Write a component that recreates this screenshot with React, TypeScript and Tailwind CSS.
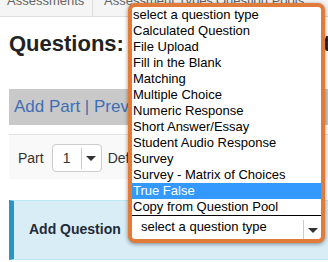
const items = [
  'select a question type',
  'Calculated Question',
  'File Upload',
  'Fill in the Blank',
  'Matching',
  'Multiple Choice',
  'Numeric Response',
  'Short Answer/Essay',
  'Student Audio Response',
  'Survey',
  'Survey - Matrix of Choices',
  'True False',
  'Copy from Question Pool',
];

function Caret() {
  return (
    <svg width="10" height="5" viewBox="0 0 10 5" className="block">
      <path d="M0 0h10L5 5z" fill="#333" />
    </svg>
  );
}

export default function App() {
  return (
    <div className="relative w-[328px] h-[262px] overflow-hidden bg-white font-['Liberation_Sans',Arial,sans-serif]">
      {/* tabs, scrolled off the top */}
      <div className="flex h-[17px] bg-[#f5f5f5] border-b border-[#ddd] text-[13px] leading-[13px] text-[#666] whitespace-nowrap overflow-hidden">
        <div className="w-[93px] shrink-0 pl-[7px] border-r border-[#ddd]"><span className="block -mt-[6px]">Assessments</span></div>
        <div className="w-[117px] shrink-0 pl-[11px] border-r border-[#ddd]"><span className="block -mt-[6px]">Assessment Types</span></div>
        <div className="shrink-0 pl-[6px]"><span className="block -mt-[6px]">Question Pools</span></div>
      </div>

      <div className="pl-[9px]">
        <h1 className="mt-[14px] text-[22px] leading-[26px] font-bold text-[#222] whitespace-nowrap">Questions: Sample Quiz Questions</h1>

        <div className="mt-[32px] h-[36px] flex items-center pl-[5px] bg-[#c9c9c9] text-[17px] leading-[20px] text-[#3f6eb5] whitespace-nowrap">
          Add Part | Preview
        </div>

        <div className="mt-[9px] border-t border-[#e3e3e3] bg-[#f9f9f9] pt-[9px] pb-[7px] pl-[9px] flex items-center text-[14px] text-[#333] whitespace-nowrap">
          <span>Part</span>
          <div className="ml-[8px] w-[50px] h-[28px] flex items-center bg-white border border-[#ccc] rounded-[4px]">
            <span className="w-[28px] text-center">1</span>
            <span className="h-[21px] border-l border-[#ccc]" />
            <span className="flex-1 flex justify-center"><Caret /></span>
          </div>
          <span className="ml-[6px]">Default Points</span>
        </div>

        <div className="mt-[21px] h-[60px] bg-[#d9edf7] border-t border-b border-[#bce8f1] border-l-[5px] border-l-[#2a95c5] pl-[15px] pt-[20px]">
          <span className="block text-[14px] leading-[16px] font-bold text-[#1d2b3a]">Add Question</span>
        </div>
      </div>

      {/* open select list with highlight box */}
      <div className="absolute left-[128px] top-[3px] w-[197px] border-4 border-[#e07b3a] rounded-[7px] bg-white shadow-[0_1px_4px_rgba(0,0,0,0.45)] overflow-hidden text-[13px] text-black">
        <ul>
          {items.map(t => (
            <li key={t} className={`h-[16px] leading-[16px] pl-[1px] whitespace-nowrap ${t === 'True False' ? 'bg-[#3399ff] text-white' : ''}`}>
              {t}
            </li>
          ))}
        </ul>
        <div className="h-[24px] border-t border-black flex">
          <span className="flex-1 pl-[9px] pt-[3px] leading-[16px] whitespace-nowrap">select a question type</span>
          <span className="w-[18px] mt-[4px] border-l border-[#ccc] flex items-center justify-center pt-[2px]"><Caret /></span>
        </div>
      </div>
    </div>
  );
}
